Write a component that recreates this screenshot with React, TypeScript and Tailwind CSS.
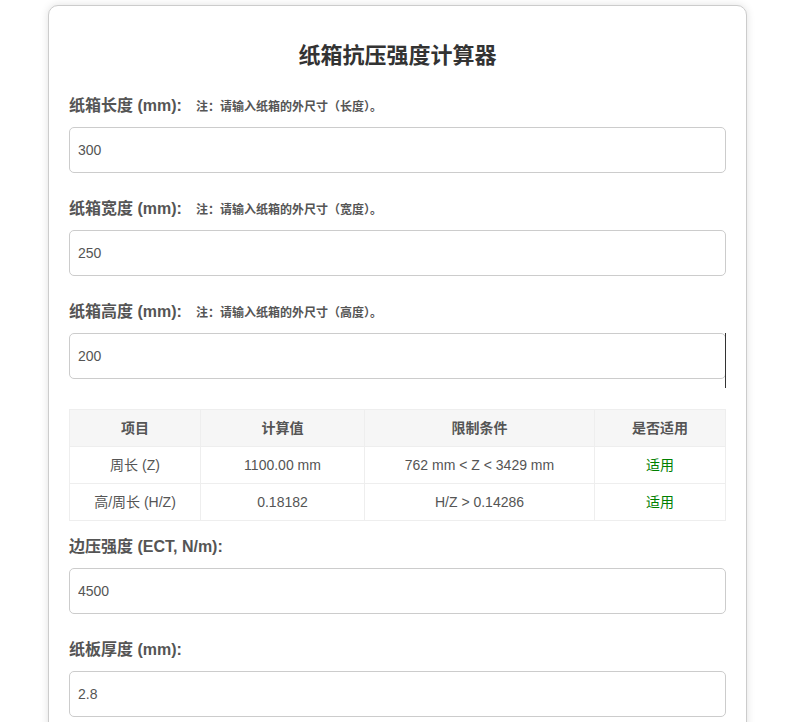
import React from "react";

const font = { fontFamily: '"Liberation Sans", "Noto Sans CJK SC", sans-serif' };

function Field({ label, note, value, caret }: { label: string; note?: string; value: string; caret?: boolean }) {
  return (
    <div className="mb-[24px]">
      <div className="flex items-baseline h-[22px] mb-[11px]">
        <span className="text-[16px] font-bold text-[#555]">{label}</span>
        {note && <span className="ml-[14px] text-[12px] font-bold text-[#555]">{note}</span>}
      </div>
      <div className="relative">
        <input
          readOnly
          value={value}
          className="block w-full h-[46px] px-2 border border-[#ccc] rounded-[5px] text-[14px] text-[#555] bg-white outline-none"
          style={font}
        />
        {caret && <div className="absolute right-0 top-0 w-px h-[55px] bg-[#333]" />}
      </div>
    </div>
  );
}

const rows = [
  ["周长 (Z)", "1100.00 mm", "762 mm < Z < 3429 mm", "适用"],
  ["高/周长 (H/Z)", "0.18182", "H/Z > 0.14286", "适用"],
];

export default function App() {
  return (
    <div className="min-h-[722px] bg-white pt-[5px]" style={font}>
      <div className="ml-[48px] w-[699px] border border-[#ccc] rounded-[10px] shadow-[0_0_8px_rgba(0,0,0,0.12)] px-[20px] pt-[30px] pb-4 bg-white">
        <h1 className="text-center text-[22px] font-bold text-[#333] h-[40px] leading-[40px] mb-[18px]">纸箱抗压强度计算器</h1>
        <Field label="纸箱长度 (mm):" note="注：请输入纸箱的外尺寸（长度）。" value="300" />
        <Field label="纸箱宽度 (mm):" note="注：请输入纸箱的外尺寸（宽度）。" value="250" />
        <Field label="纸箱高度 (mm):" note="注：请输入纸箱的外尺寸（高度）。" value="200" caret />
        <table className="w-full border-collapse text-[14px] text-[#555] mt-[30px] mb-[14px]">
          <thead>
            <tr className="bg-[#f6f6f6] h-[37px]">
              <th className="border border-[#eee] font-bold w-[131px]">项目</th>
              <th className="border border-[#eee] font-bold w-[164px]">计算值</th>
              <th className="border border-[#eee] font-bold w-[230px]">限制条件</th>
              <th className="border border-[#eee] font-bold">是否适用</th>
            </tr>
          </thead>
          <tbody>
            {rows.map((r, i) => (
              <tr key={i} className="h-[37px] text-center">
                <td className="border border-[#eee]">{r[0]}</td>
                <td className="border border-[#eee]">{r[1]}</td>
                <td className="border border-[#eee]">{r[2]}</td>
                <td className="border border-[#eee] text-[#008000]">{r[3]}</td>
              </tr>
            ))}
          </tbody>
        </table>
        <Field label="边压强度 (ECT, N/m):" value="4500" />
        <Field label="纸板厚度 (mm):" value="2.8" />
      </div>
    </div>
  );
}
